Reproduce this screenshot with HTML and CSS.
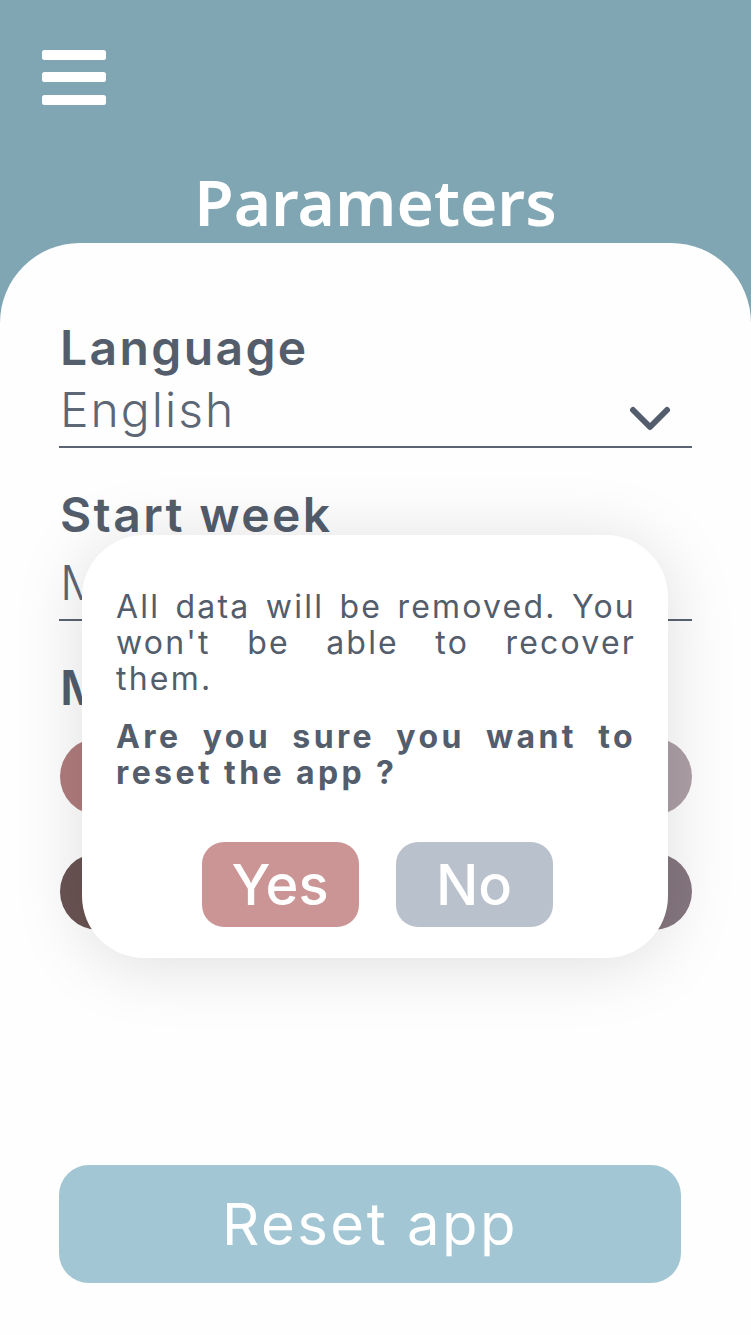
FILE: index.html
```html
<!DOCTYPE html>
<html lang="en">
<head>
<meta charset="utf-8">
<title>Parameters</title>
<link rel="stylesheet" href="styles.css">
</head>
<body>
<div class="app">
  <header class="top">
    <button class="menu" aria-label="Menu">
      <svg width="64" height="55" viewBox="0 0 64 55"><rect x="0" y="0" width="64" height="10" rx="2.5" fill="#fff"/><rect x="0" y="22" width="64" height="10" rx="2.5" fill="#fff"/><rect x="0" y="45" width="64" height="10" rx="2.5" fill="#fff"/></svg>
    </button>
    <h1 class="title">Parameters</h1>
  </header>

  <main class="card">
    <section class="field">
      <div class="label">Language</div>
      <div class="select">
        <span class="value">English</span>
        <svg class="chev" width="42" height="26" viewBox="0 0 42 26"><path d="M4 4 L21 21 L38 4" fill="none" stroke="#535d6c" stroke-width="6" stroke-linecap="round" stroke-linejoin="round"/></svg>
      </div>
    </section>

    <section class="field second">
      <div class="label">Start week</div>
      <div class="select">
        <span class="value">Monday</span>
      </div>
    </section>

    <section class="field third">
      <div class="label">Main color</div>
      <div class="swatches">
        <span class="dot c1"></span><span class="dot c2"></span><span class="dot c3"></span><span class="dot c4"></span><span class="dot c5"></span>
        <span class="dot c6"></span><span class="dot c7"></span><span class="dot c8"></span><span class="dot c9"></span><span class="dot c10"></span>
      </div>
    </section>

    <button class="reset">Reset app</button>
  </main>

  <div class="modal" role="dialog">
    <p class="msg"><span class="ln">All data will be removed. You</span><span class="ln">won't be able to recover</span>them.</p>
    <p class="ask"><span class="ln">Are you sure you want to</span>reset the app ?</p>
    <div class="actions">
      <button class="btn yes">Yes</button>
      <button class="btn no">No</button>
    </div>
  </div>
</div>
</body>
</html>
```

FILE: styles.css
```css
* { box-sizing: border-box; }
html, body { margin: 0; padding: 0; }
body {
  width: 751px;
  height: 1335px;
  background: #80a6b3;
  font-family: "Inter", "DejaVu Sans", sans-serif;
  color: #535d6c;
  overflow: hidden;
}
.app {
  position: relative;
  width: 751px;
  height: 1335px;
  display: flex;
  flex-direction: column;
}
.top {
  height: 243px;
  display: flex;
  flex-direction: column;
  padding: 50px 0 0 42px;
}
.menu {
  border: 0;
  padding: 0;
  background: none;
  width: 64px;
  height: 55px;
  display: block;
}
.menu svg { display: block; }
.title {
  margin: 0;
  margin-left: -42px;
  padding-top: 57px;
  text-align: center;
  font-family: "Noto Sans", "Open Sans", sans-serif;
  font-weight: 600;
  font-size: 64px;
  line-height: 80px;
  color: #fff;
}
.card {
  flex: 1;
  background: #fefefe;
  border-radius: 80px 80px 0 0;
  padding: 77px 59px 52px 59px;
  display: flex;
  flex-direction: column;
}
.field { width: 633px; }
.label {
  font-size: 48px;
  line-height: 56px;
  font-weight: 600;
  letter-spacing: 2.4px;
  padding-left: 1px;
}
.select {
  margin-top: 6px;
  display: flex;
  align-items: center;
  justify-content: space-between;
  border-bottom: 2px solid #5a6372;
  padding: 0 21px 8px 1px;
  height: 66px;
}
.value {
  font-size: 48px;
  line-height: 56px;
  font-weight: 300;
  letter-spacing: 2px;
  color: #5d6675;
}
.chev { display: block; margin-top: 18px; }
.second { margin-top: 39px; }
.second .select { margin-top: 9px; padding-bottom: 6px; height: 69px; }
.third { margin-top: 39px; }
.swatches {
  margin-top: 22px;
  display: grid;
  grid-template-columns: repeat(5, 77px);
  justify-content: space-between;
  row-gap: 38px;
  padding-left: 1px;
}
.dot {
  width: 77px;
  height: 77px;
  border-radius: 50%;
  display: block;
}
.c1 { background: #b07c7c; }
.c2 { background: #c9a394; }
.c3 { background: #a7b8a0; }
.c4 { background: #8fa7b8; }
.c5 { background: #ad9fa6; }
.c6 { background: #6a5453; }
.c7 { background: #7c6a5e; }
.c8 { background: #5d6b5a; }
.c9 { background: #566475; }
.c10 { background: #86777f; }
.reset {
  margin-top: auto;
  width: 622px;
  height: 118px;
  border: 0;
  border-radius: 30px;
  background: #a2c6d3;
  color: #fff;
  font-family: "Inter", "DejaVu Sans", sans-serif;
  font-size: 58px;
  font-weight: 400;
  letter-spacing: 2.5px;
}
.modal {
  position: absolute;
  left: 82px;
  top: 535px;
  width: 586px;
  height: 423px;
  background: #fff;
  border-radius: 62px;
  box-shadow: 0 6px 70px rgba(0, 0, 0, 0.13);
  padding: 54px 32px 31px 34px;
  display: flex;
  flex-direction: column;
}
.msg, .ask {
  margin: 0;
  font-size: 32px;
  line-height: 36px;
  letter-spacing: 2.2px;
}
.ln {
  display: block;
  text-align: justify;
  text-align-last: justify;
}
.msg { font-weight: 400; }
.ask { font-weight: 700; margin-top: 22px; letter-spacing: 3.4px; }
.actions {
  margin-top: auto;
  display: flex;
  justify-content: center;
  gap: 37px;
  padding-left: 2px;
}
.btn {
  width: 157px;
  height: 85px;
  border: 0;
  border-radius: 22px;
  color: #fff;
  font-family: "Inter", "DejaVu Sans", sans-serif;
  font-size: 56px;
  font-weight: 500;
  padding: 0;
}
.yes { background: #cc9595; }
.no { background: #b9c1cc; }
```
